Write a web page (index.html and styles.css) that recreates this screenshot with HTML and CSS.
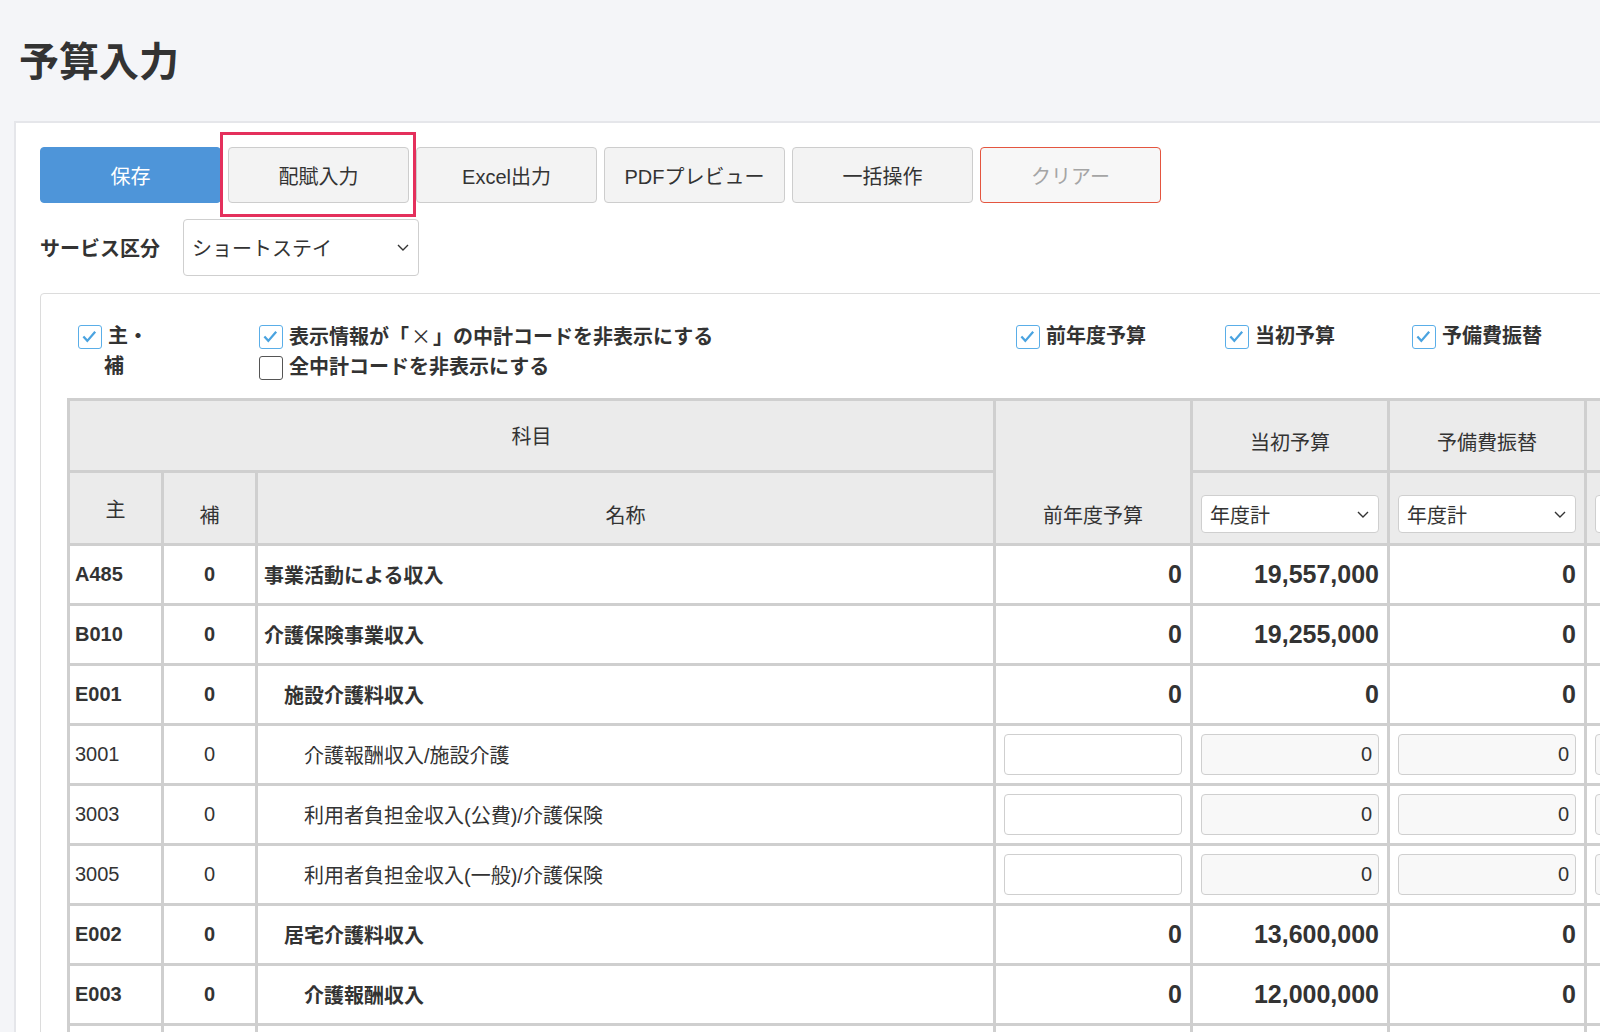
FILE: index.html
```html
<!DOCTYPE html>
<html lang="ja">
<head>
  <meta charset="UTF-8">
  <title>予算入力</title>
  <link rel="stylesheet" href="styles.css">
</head>
<body>
  <h1 class="page-title">予算入力</h1>

  <div class="panel">
    <div class="toolbar">
      <button class="btn btn-save">保存</button>
      <button class="btn btn-marked">配賦入力</button>
      <button class="btn">Excel出力</button>
      <button class="btn">PDFプレビュー</button>
      <button class="btn">一括操作</button>
      <button class="btn btn-clear">クリアー</button>
    </div>

    <div class="service-row">
      <span class="service-label">サービス区分</span>
      <div class="select select-service">
        <span>ショートステイ</span>
        <svg width="14" height="9" viewBox="0 0 14 9"><path d="M2 2 L7 7 L12 2" fill="none" stroke="#333" stroke-width="1.4"/></svg>
      </div>
    </div>

    <div class="budget-box">
      <div class="options">
        <label class="opt">
          <span class="check on"><svg viewBox="0 0 24 24"><path d="M5 12 L9.5 17 L18.5 6.5" fill="none" stroke="#4aa3e0" stroke-width="2.6"/></svg></span>
          <span class="opt-text">主・<br><span class="wrap-line">補</span></span>
        </label>
        <div class="opt-stack">
          <label class="opt">
            <span class="check on"><svg viewBox="0 0 24 24"><path d="M5 12 L9.5 17 L18.5 6.5" fill="none" stroke="#4aa3e0" stroke-width="2.6"/></svg></span>
            <span class="opt-text">表示情報が「<span class="cross">×</span>」の中計コードを非表示にする</span>
          </label>
          <label class="opt">
            <span class="check"></span>
            <span class="opt-text">全中計コードを非表示にする</span>
          </label>
        </div>
        <label class="opt">
          <span class="check on"><svg viewBox="0 0 24 24"><path d="M5 12 L9.5 17 L18.5 6.5" fill="none" stroke="#4aa3e0" stroke-width="2.6"/></svg></span>
          <span class="opt-text">前年度予算</span>
        </label>
        <label class="opt">
          <span class="check on"><svg viewBox="0 0 24 24"><path d="M5 12 L9.5 17 L18.5 6.5" fill="none" stroke="#4aa3e0" stroke-width="2.6"/></svg></span>
          <span class="opt-text">当初予算</span>
        </label>
        <label class="opt">
          <span class="check on"><svg viewBox="0 0 24 24"><path d="M5 12 L9.5 17 L18.5 6.5" fill="none" stroke="#4aa3e0" stroke-width="2.6"/></svg></span>
          <span class="opt-text">予備費振替</span>
        </label>
      </div>

      <table class="budget">
        <colgroup>
          <col class="c-main">
          <col class="c-sub">
          <col class="c-name">
          <col class="c-amt">
          <col class="c-amt">
          <col class="c-amt">
          <col class="c-amt">
        </colgroup>
        <thead>
          <tr class="head-1">
            <th colspan="3" class="mid">科目</th>
            <th rowspan="2">前年度予算</th>
            <th>当初予算</th>
            <th>予備費振替</th>
            <th></th>
          </tr>
          <tr class="head-2">
            <th class="mid">主</th>
            <th>補</th>
            <th>名称</th>
            <th class="sel-cell"><div class="select"><span>年度計</span><svg width="14" height="9" viewBox="0 0 14 9"><path d="M2 2 L7 7 L12 2" fill="none" stroke="#333" stroke-width="1.4"/></svg></div></th>
            <th class="sel-cell"><div class="select"><span>年度計</span><svg width="14" height="9" viewBox="0 0 14 9"><path d="M2 2 L7 7 L12 2" fill="none" stroke="#333" stroke-width="1.4"/></svg></div></th>
            <th class="sel-cell"><div class="select"></div></th>
          </tr>
        </thead>
        <tbody>
          <tr class="sum">
            <td class="code">A485</td><td class="sub">0</td><td class="name">事業活動による収入</td>
            <td class="num">0</td><td class="num">19,557,000</td><td class="num">0</td><td class="num"></td>
          </tr>
          <tr class="sum">
            <td class="code">B010</td><td class="sub">0</td><td class="name">介護保険事業収入</td>
            <td class="num">0</td><td class="num">19,255,000</td><td class="num">0</td><td class="num"></td>
          </tr>
          <tr class="sum">
            <td class="code">E001</td><td class="sub">0</td><td class="name lv1">施設介護料収入</td>
            <td class="num">0</td><td class="num">0</td><td class="num">0</td><td class="num"></td>
          </tr>
          <tr>
            <td class="code">3001</td><td class="sub">0</td><td class="name lv2">介護報酬収入/施設介護</td>
            <td class="in-cell"><input class="field" type="text"></td>
            <td class="in-cell"><input class="field ro" type="text" value="0" readonly></td>
            <td class="in-cell"><input class="field ro" type="text" value="0" readonly></td>
            <td class="in-cell"><input class="field ro" type="text" readonly></td>
          </tr>
          <tr>
            <td class="code">3003</td><td class="sub">0</td><td class="name lv2">利用者負担金収入(公費)/介護保険</td>
            <td class="in-cell"><input class="field" type="text"></td>
            <td class="in-cell"><input class="field ro" type="text" value="0" readonly></td>
            <td class="in-cell"><input class="field ro" type="text" value="0" readonly></td>
            <td class="in-cell"><input class="field ro" type="text" readonly></td>
          </tr>
          <tr>
            <td class="code">3005</td><td class="sub">0</td><td class="name lv2">利用者負担金収入(一般)/介護保険</td>
            <td class="in-cell"><input class="field" type="text"></td>
            <td class="in-cell"><input class="field ro" type="text" value="0" readonly></td>
            <td class="in-cell"><input class="field ro" type="text" value="0" readonly></td>
            <td class="in-cell"><input class="field ro" type="text" readonly></td>
          </tr>
          <tr class="sum">
            <td class="code">E002</td><td class="sub">0</td><td class="name lv1">居宅介護料収入</td>
            <td class="num">0</td><td class="num">13,600,000</td><td class="num">0</td><td class="num"></td>
          </tr>
          <tr class="sum">
            <td class="code">E003</td><td class="sub">0</td><td class="name lv2">介護報酬収入</td>
            <td class="num">0</td><td class="num">12,000,000</td><td class="num">0</td><td class="num"></td>
          </tr>
          <tr>
            <td class="code"></td><td class="sub"></td><td class="name lv2"></td>
            <td class="in-cell"></td>
            <td class="in-cell"></td>
            <td class="in-cell"></td>
            <td class="in-cell"></td>
          </tr>
        </tbody>
      </table>
    </div>
  </div>
</body>
</html>
```

FILE: styles.css
```css
html, body {
  overflow: hidden;
}
body {
  margin: 0;
  background: #f4f5f8;
  color: #333;
  font-family: "Liberation Sans", "Noto Sans CJK JP", sans-serif;
}

.page-title {
  margin: 0;
  padding: 38px 0 0 19px;
  font-size: 40px;
  line-height: 48px;
  font-weight: bold;
  color: #333;
  height: 83px;
}

.panel {
  margin-left: 14px;
  width: 1900px;
  background: #fff;
  border-top: 2px solid #e5e6ea;
  border-left: 2px solid #e5e6ea;
  padding: 24px 0 0 24px;
  min-height: 1000px;
}

/* buttons */
.toolbar {
  display: flex;
  gap: 7px;
}
.btn {
  width: 181px;
  height: 56px;
  font-family: inherit;
  font-size: 20px;
  color: #333;
  background: #f3f3f3;
  border: 1px solid #cdcdcd;
  border-radius: 4px;
  padding: 0;
}
.btn-save {
  background: #4e95d9;
  border-color: #4e95d9;
  color: #fff;
}
.btn-clear {
  background: #f7f7f7;
  border-color: #e4553f;
  color: #a5a5a5;
}
.btn-marked {
  position: relative;
}
.btn-marked::after {
  content: "";
  position: absolute;
  left: -9px;
  right: -8px;
  top: -16px;
  bottom: -15px;
  border: 3px solid #e4305c;
}

/* service select */
.service-row {
  display: flex;
  align-items: center;
  margin-top: 16px;
}
.service-label {
  font-size: 20px;
  font-weight: bold;
  margin-right: 23px;
}
.select {
  display: flex;
  align-items: center;
  justify-content: space-between;
  box-sizing: border-box;
  background: #fff;
  border: 1px solid #cfcfcf;
  border-radius: 4px;
  font-size: 20px;
  font-weight: normal;
  color: #333;
  text-align: left;
  padding: 0 8px;
}
.select-service {
  width: 236px;
  height: 57px;
}

/* options + table box */
.budget-box {
  margin-top: 17px;
  border: 1px solid #dcdcdc;
  border-radius: 4px;
  padding: 27px 0 0 26px;
  min-height: 900px;
}
.options {
  display: grid;
  grid-template-columns: 181px 757px 209px 187px 200px;
  padding-left: 11px;
  font-size: 20px;
  font-weight: bold;
  line-height: 30px;
}
.opt-stack {
  display: flex;
  flex-direction: column;
}
.opt {
  display: flex;
  align-items: flex-start;
}
.check {
  flex: none;
  box-sizing: border-box;
  width: 24px;
  height: 24px;
  margin: 4px 6px 0 0;
  border: 1.5px solid #555;
  border-radius: 3px;
  background: #fff;
}
.check.on {
  border-color: #5aaee8;
}
.check svg {
  display: block;
  width: 21px;
  height: 21px;
}
.wrap-line {
  margin-left: -4px;
}
.cross {
  font-family: "Noto Sans CJK JP", sans-serif;
  font-weight: normal;
  padding: 0 2px;
}

/* table */
.budget {
  margin-top: 16px;
  border-collapse: collapse;
  table-layout: fixed;
  width: 1714px;
  font-size: 20px;
}
.c-main, .c-sub { width: 94px; }
.c-name { width: 738px; }
.c-amt { width: 197px; }

.budget th,
.budget td {
  border: 3px solid #cfcfcf;
}
.budget th {
  background: #ebebeb;
  font-weight: normal;
  vertical-align: bottom;
  padding: 0 0 14px;
}
.budget th.mid {
  vertical-align: middle;
  padding: 0;
}
.head-1 th { height: 55px; }
.head-2 th { height: 56px; }
.budget th.sel-cell {
  padding: 0 8px 10px;
}
.sel-cell .select {
  width: 100%;
  height: 38px;
}

.budget td {
  height: 57px;
  padding: 0 6px;
  vertical-align: middle;
  white-space: nowrap;
}
.budget td.code {
  padding: 0 5px;
}
.budget td.sub {
  text-align: center;
}
.budget td.lv1 { padding-left: 26px; }
.budget td.lv2 { padding-left: 46px; }
.sum td {
  font-weight: bold;
}
.budget td.num {
  text-align: right;
  font-size: 25px;
  padding-right: 8px;
}
.budget td.in-cell {
  padding: 0 8px;
}
.field {
  box-sizing: border-box;
  width: 100%;
  height: 41px;
  display: block;
  border: 1px solid #cfcfcf;
  border-radius: 4px;
  background: #fff;
  font-family: inherit;
  font-size: 20px;
  color: #333;
  text-align: right;
  padding: 0 6px;
}
.field.ro {
  background: #f8f8f8;
}
```
